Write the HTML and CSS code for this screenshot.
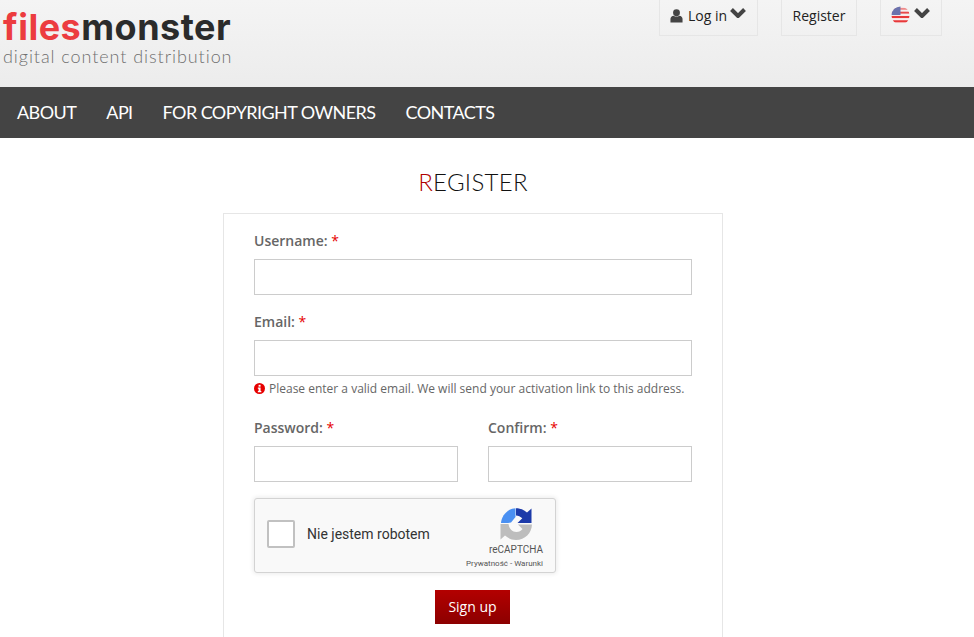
FILE: index.html
```html
<!DOCTYPE html>
<html lang="en">
<head>
    <meta charset="UTF-8">
    <meta name="viewport" content="width=device-width, initial-scale=1.0">
    <title>Register</title>
    <link rel="stylesheet" href="styles.css">
</head>
<body>
    <header class="top-bar">
        <a href="#" class="logo">
            <span class="logo-name"><span class="logo-red">files</span>monster</span>
            <span class="logo-tag">digital content distribution</span>
        </a>
        <div class="top-links">
            <a href="#" class="top-btn login-btn">
                <svg class="user-icon" viewBox="0 0 14 15" width="13" height="14"><circle cx="7" cy="4" r="3.7" fill="#444"/><path d="M0.5 14.6V10.5C0.5 8.6 2 7.5 4 7.2C5.6 8.4 8.4 8.4 10 7.2C12 7.5 13.5 8.6 13.5 10.5V14.6Z" fill="#444"/></svg>
                Log in
                <svg class="chevron login-chevron" viewBox="0 0 16 11" width="16" height="11"><path d="M1.5 2.500L8 9L14.500 2.500" fill="none" stroke="#444" stroke-width="4"/></svg>
            </a>
            <a href="#" class="top-btn register-btn">Register</a>
            <a href="#" class="top-btn lang-btn">
                <svg class="flag" viewBox="0 0 20 20" width="19" height="19">
                    <defs><clipPath id="flag-clip"><circle cx="10" cy="10" r="9.5"/></clipPath></defs>
                    <g clip-path="url(#flag-clip)">
                        <rect width="20" height="20" fill="#f6eeee"/>
                        <rect y="2" width="20" height="2" fill="#ee8a8a"/>
                        <rect y="6" width="20" height="2" fill="#e8484a"/>
                        <rect y="10.500" width="20" height="2.200" fill="#e8383a"/>
                        <rect y="15" width="20" height="2.200" fill="#e8383a"/>
                        <rect width="10" height="9.500" fill="#6a72ad"/>
                    </g>
                </svg>
                <svg class="chevron" viewBox="0 0 16 11" width="16" height="11"><path d="M1.5 2.500L8 9L14.500 2.500" fill="none" stroke="#444" stroke-width="4"/></svg>
            </a>
        </div>
    </header>

    <nav class="main-nav">
        <a href="#">ABOUT</a>
        <a href="#">API</a>
        <a href="#">FOR COPYRIGHT OWNERS</a>
        <a href="#">CONTACTS</a>
    </nav>

    <main class="content">
        <h1 class="page-title"><span class="first-letter">R</span>EGISTER</h1>
        <form class="register-card">
            <div class="form-item">
                <label for="username">Username: <span class="req">*</span></label>
                <input type="text" id="username">
            </div>
            <div class="form-item email-item">
                <label for="email">Email: <span class="req">*</span></label>
                <input type="text" id="email">
                <p class="hint">
                    <svg viewBox="0 0 12 12" width="11" height="11"><circle cx="6" cy="6" r="6" fill="#e60000"/><rect x="5" y="2" width="2.2" height="2" fill="#fff"/><path d="M4.2 5H7.2V8.6H8V10H4.2V8.6H5V6.2H4.2Z" fill="#fff"/></svg>
                    Please enter a valid email. We will send your activation link to this address.
                </p>
            </div>
            <div class="form-row">
                <div class="form-item">
                    <label for="password">Password: <span class="req">*</span></label>
                    <input type="password" id="password">
                </div>
                <div class="form-item">
                    <label for="confirm">Confirm: <span class="req">*</span></label>
                    <input type="password" id="confirm">
                </div>
            </div>
            <div class="captcha">
                <span class="captcha-box"></span>
                <span class="captcha-text">Nie jestem robotem</span>
                <div class="captcha-brand">
                    <svg viewBox="0 0 32 32" width="32" height="32">
                        <path d="M16 .3C20 .3 24 1.800 27 4.600L31.500 .5V15H17.500L22.300 10.300C20.500 8.600 18.300 7.600 16 7.500Z" fill="#1c3aa9"/>
                        <path d="M15.500 .3V9L11 14.500L8 15H1C1.500 8 7 .8 15.500 .3Z" fill="#4a90f2"/>
                        <path d="M.5 16H8.500C9 20.500 12.300 24 16.500 24C19 24 21 23 22.500 21L18 16.500H32C31.700 25 25 32 16 32C11.800 32 8 30.300 5 27.500L.5 31.500Z" fill="#bdbdbd"/>
                    </svg>
                    <span class="brand-name">reCAPTCHA</span>
                    <span class="brand-links">Prywatność - Warunki</span>
                </div>
            </div>
            <button type="button" class="signup-btn">Sign up</button>
        </form>
    </main>
</body>
</html>
```

FILE: styles.css
```css
html, body {
    height: 100%;
    overflow: hidden;
}

body {
    margin: 0;
    font-family: 'Open Sans', sans-serif;
    font-size: 14px;
    color: #555;
    background: #fff;
}

a {
    text-decoration: none;
}

.top-bar {
    height: 87px;
    box-sizing: border-box;
    display: flex;
    justify-content: space-between;
    background: linear-gradient(to bottom, #f4f4f4, #ececec);
    padding: 0 32px 0 3px;
}

.logo {
    display: flex;
    flex-direction: column;
    padding-top: 10px;
}

.logo-name {
    font-family: 'Inter', sans-serif;
    font-weight: 700;
    font-size: 36px;
    line-height: 34px;
    letter-spacing: 0.5px;
    color: #2b2b2b;
}

.logo-red {
    color: #ec3c3f;
}

.logo-tag {
    margin-top: 2px;
    font-family: 'Lato', sans-serif;
    font-weight: 300;
    font-size: 18px;
    line-height: 20px;
    letter-spacing: 0.93px;
    color: #707070;
}

.top-links {
    display: flex;
    align-items: flex-start;
    gap: 23px;
}

.top-btn {
    height: 36px;
    box-sizing: border-box;
    display: flex;
    align-items: center;
    gap: 4px;
    border: 1px solid #e6e6e6;
    border-top: none;
    color: #222;
    font-size: 14px;
    padding-bottom: 4px;
}

.login-btn {
    width: 99px;
    padding-left: 10px;
}

.user-icon {
    margin-right: 1px;
}

.register-btn {
    width: 76px;
    justify-content: center;
}

.lang-btn {
    width: 62px;
    padding-left: 10px;
}

.chevron {
    margin-top: -6px;
}

.login-chevron {
    margin-left: -1px;
}

.main-nav {
    height: 51px;
    box-sizing: border-box;
    display: flex;
    align-items: center;
    gap: 30px;
    padding: 0 0 2px 17px;
    background: #444;
}

.main-nav a {
    font-family: 'Lato', sans-serif;
    font-size: 18px;
    letter-spacing: -0.57px;
    color: #fff;
}

.content {
    width: 500px;
    margin-left: 223px;
}

.page-title {
    margin: 0;
    height: 75px;
    padding-top: 29px;
    box-sizing: border-box;
    text-align: center;
    font-family: 'Lato', sans-serif;
    font-size: 24px;
    font-weight: 300;
    line-height: 29px;
    letter-spacing: 0.3px;
    color: #111;
}

.first-letter {
    color: #b00000;
}

.register-card {
    box-sizing: border-box;
    display: flex;
    flex-direction: column;
    height: 424px;
    padding: 17px 30px 0;
    border: 1px solid #e6e6e6;
    border-bottom: none;
}

.form-item {
    display: flex;
    flex-direction: column;
    margin-bottom: 17px;
}

.form-item label {
    height: 19px;
    line-height: 19px;
    margin-bottom: 9px;
    font-weight: 600;
    color: #666;
}

.req {
    color: #e60000;
    font-weight: normal;
}

.form-item input {
    box-sizing: border-box;
    width: 100%;
    height: 36px;
    border: 1px solid #ccc;
    background: #fff;
    outline: none;
}

.email-item {
    margin-bottom: 0;
}

.hint {
    display: flex;
    align-items: center;
    gap: 4px;
    height: 18px;
    margin: 3px 0 21px;
    font-size: 12px;
    color: #666;
}

.form-row {
    display: grid;
    grid-template-columns: 204px 204px;
    gap: 30px;
}

.captcha {
    box-sizing: border-box;
    width: 302px;
    height: 75px;
    margin-top: -1px;
    display: flex;
    align-items: center;
    padding: 0 12px 4px 12px;
    background: #f9f9f9;
    border: 1px solid #d3d3d3;
    border-radius: 3px;
    box-shadow: 0 0 4px 1px rgba(0, 0, 0, 0.08);
}

.captcha-box {
    box-sizing: border-box;
    width: 28px;
    height: 28px;
    background: #fff;
    border: 2px solid #c1c1c1;
    border-radius: 2px;
}

.captcha-text {
    margin-left: 12px;
    font-family: Roboto, sans-serif;
    font-size: 14px;
    color: #333;
}

.captcha-brand {
    margin-left: auto;
    align-self: flex-start;
    padding-top: 9px;
    display: flex;
    flex-direction: column;
    align-items: flex-end;
    font-family: Roboto, sans-serif;
    color: #555;
}

.captcha-brand svg {
    margin-right: 11px;
}

.brand-name {
    margin-top: 3px;
    font-size: 10px;
    line-height: 14px;
}

.brand-links {
    margin-top: 1px;
    font-size: 8px;
    line-height: 12px;
}

.signup-btn {
    align-self: flex-start;
    width: 75px;
    height: 34px;
    margin: 17px 0 0 181px;
    padding: 0 0 2px;
    border: none;
    background: linear-gradient(to bottom, #b30000, #8c0000);
    color: #fff;
    font-family: 'Open Sans', sans-serif;
    font-size: 14px;
}
```
